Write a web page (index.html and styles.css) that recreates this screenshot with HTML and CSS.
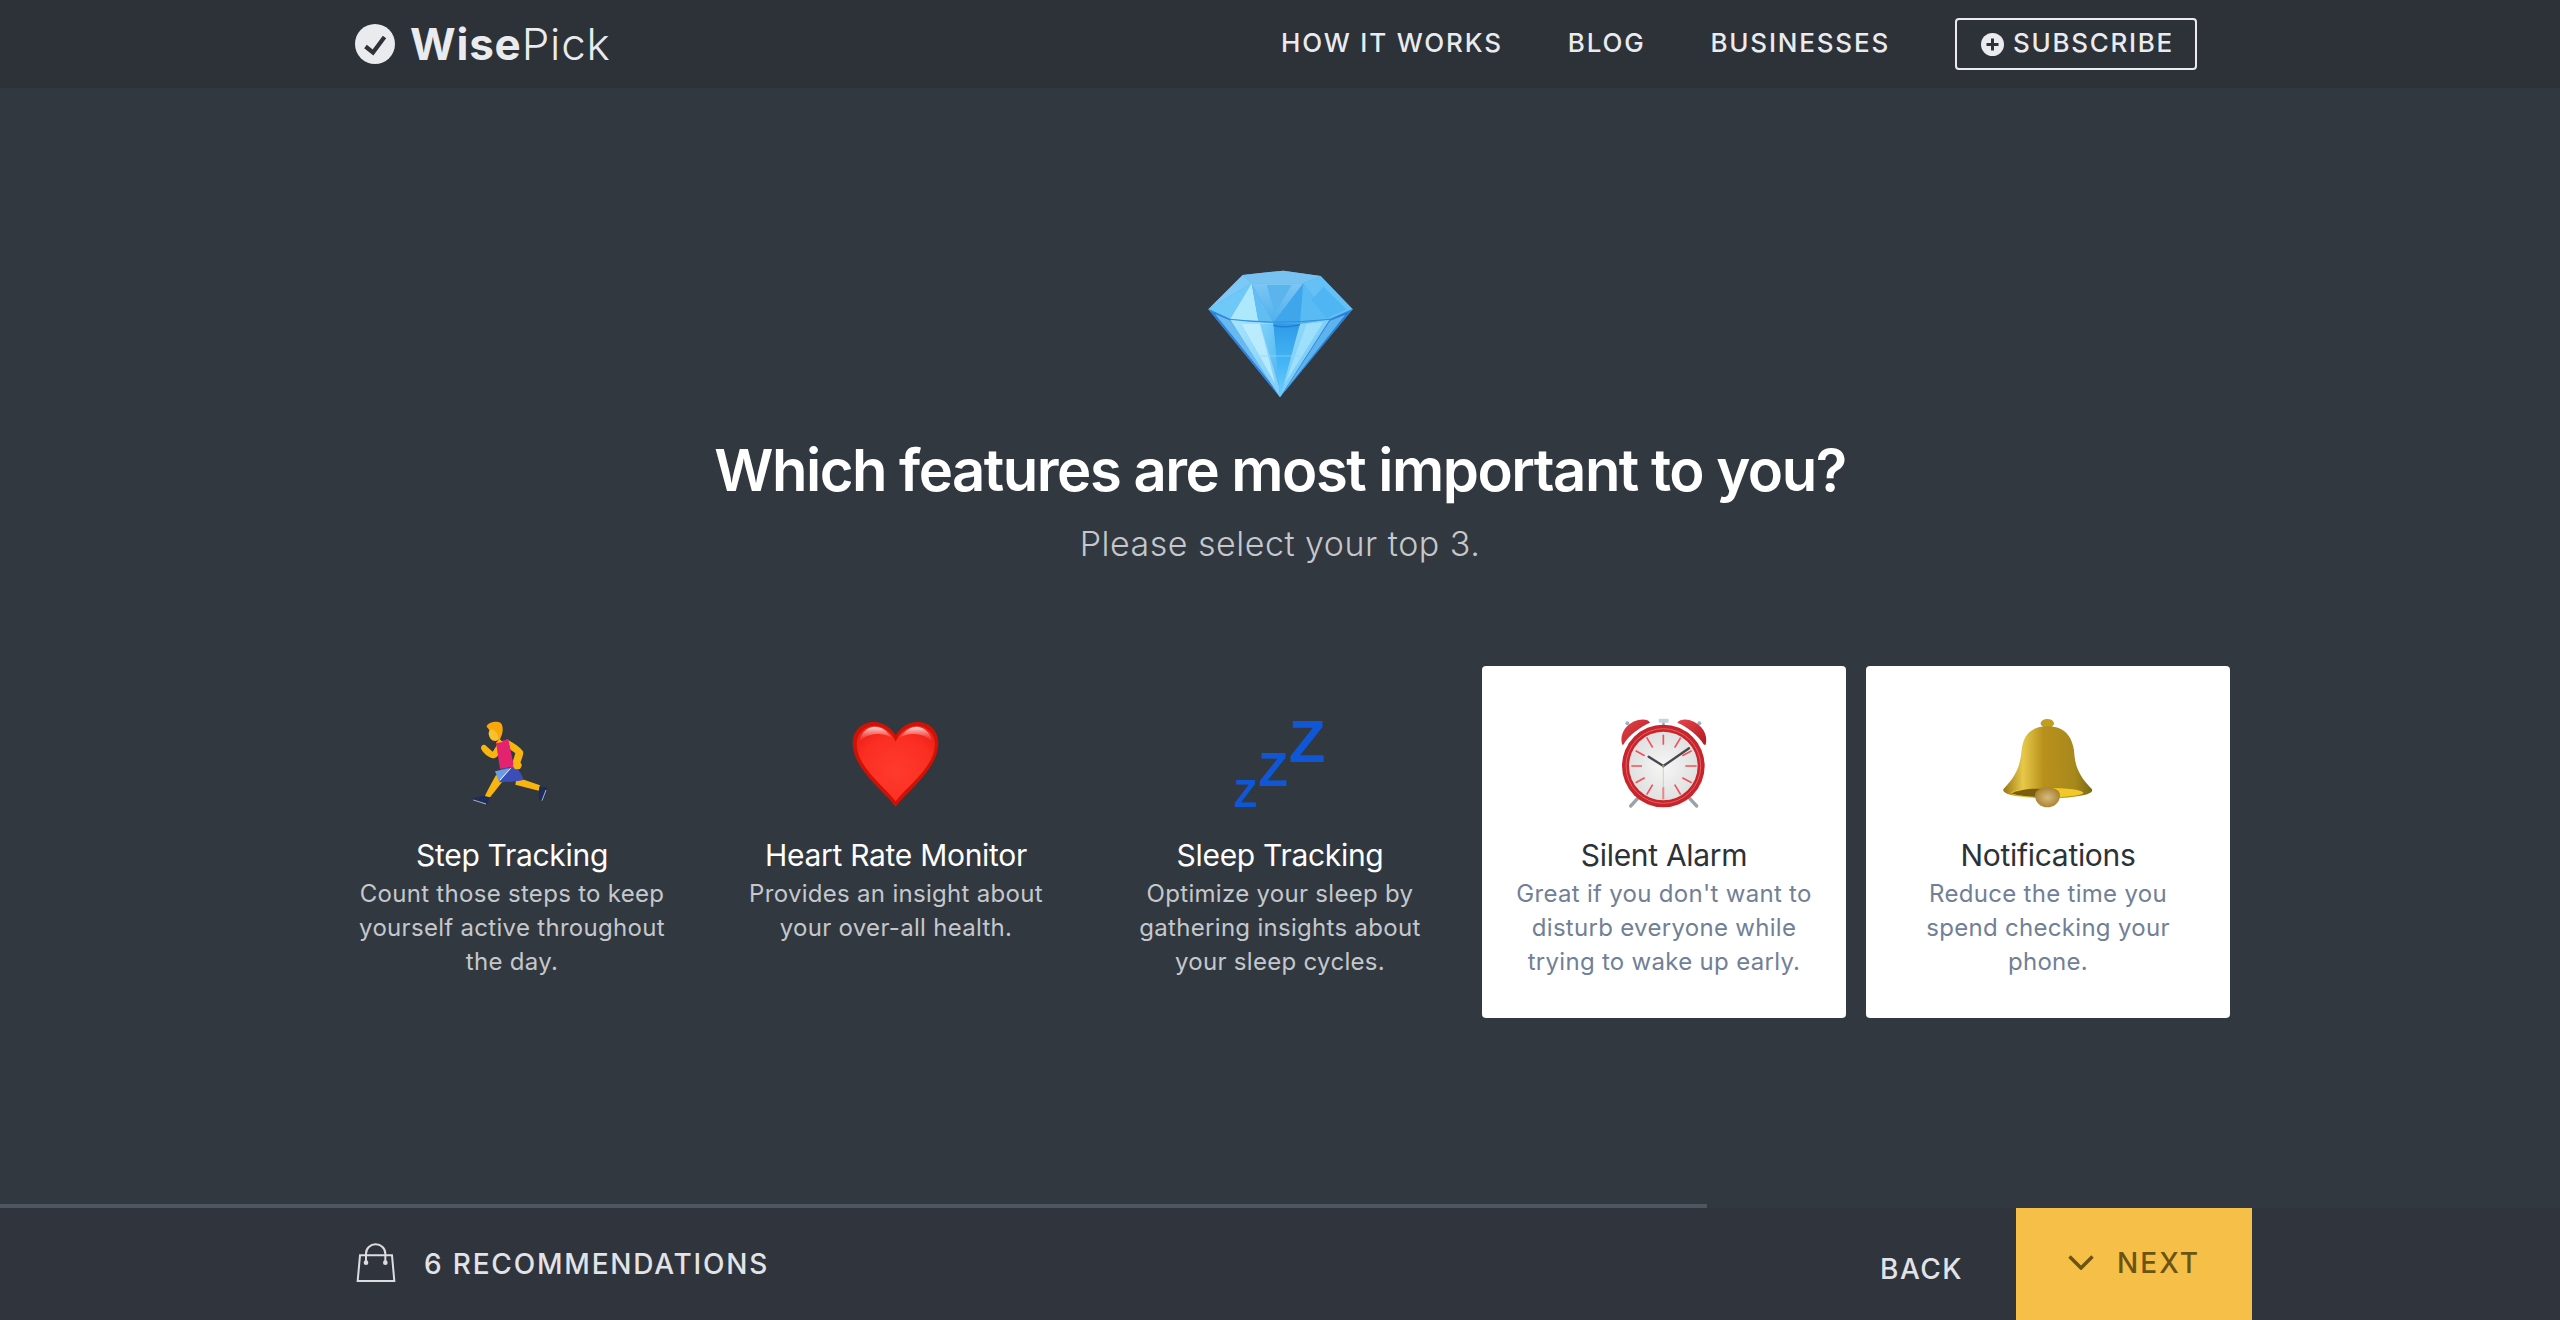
FILE: index.html
```html
<!DOCTYPE html>
<html lang="en">
<head>
<meta charset="utf-8">
<title>WisePick</title>
<link rel="stylesheet" href="styles.css">
</head>
<body>
<header class="topbar">
  <a class="logo">
    <svg class="logo-mark" viewBox="0 0 40 40"><circle cx="20" cy="20" r="20" fill="#e9ebee"/><path d="M10.5 22.5 L18 28.5 L29.5 13" fill="none" stroke="#2d3138" stroke-width="4.2"/></svg>
    <span class="logo-text"><b>Wise</b><span class="logo-light">Pick</span></span>
  </a>
  <nav class="nav">
    <a class="nav-link">HOW IT WORKS</a>
    <a class="nav-link">BLOG</a>
    <a class="nav-link">BUSINESSES</a>
    <a class="subscribe">
      <svg class="plus" viewBox="0 0 23 23"><circle cx="11.5" cy="11.5" r="11.5" fill="#e9ebee"/><path d="M11.5 5.5V17.5M5.5 11.5H17.5" stroke="#2d3138" stroke-width="3"/></svg>
      SUBSCRIBE
    </a>
  </nav>
</header>

<main class="main">
  <svg class="hero-icon" viewBox="120 30 480 480">
    <defs>
      <linearGradient id="dTop" x1="0" y1="0" x2="0" y2="1"><stop offset="0" stop-color="#7cc6f4"/><stop offset="1" stop-color="#4fb0ee"/></linearGradient>
      <linearGradient id="dMid" x1="0" y1="0" x2="0" y2="1"><stop offset="0" stop-color="#2f9be8"/><stop offset=".55" stop-color="#45b6f5"/><stop offset="1" stop-color="#6fd0fb"/></linearGradient>
      <linearGradient id="dL" x1="0" y1="0" x2="1" y2="1"><stop offset="0" stop-color="#a8e4fd"/><stop offset="1" stop-color="#7fcdf8"/></linearGradient>
      <linearGradient id="dR" x1="0" y1="0" x2="1" y2="1"><stop offset="0" stop-color="#9be0fc"/><stop offset="1" stop-color="#5fbcf3"/></linearGradient>
      <linearGradient id="dS" x1="0" y1="0" x2="1" y2="1"><stop offset="0" stop-color="#7ed2fa"/><stop offset="1" stop-color="#4fb2f0"/></linearGradient>
    </defs>
    <polygon points="248,75 370,62 482,78 578,178 360,442 145,178" fill="#4aa7ea"/>
    <polygon points="248,75 370,62 482,78 430,100 275,100" fill="#78c2f2"/>
    <polygon points="248,75 275,100 145,178" fill="#7cc8f6"/>
    <polygon points="275,100 145,178 210,208" fill="#6ec8f8"/>
    <polygon points="275,100 210,208 295,212" fill="#aee8fd"/>
    <polygon points="275,100 295,212 340,218" fill="#62bdf3"/>
    <polygon points="275,100 430,100 340,218" fill="url(#dTop)"/>
    <polygon points="320,105 395,105 345,190" fill="#5bb4ec"/>
    <polygon points="430,100 340,218 420,218" fill="#3fa6eb"/>
    <polygon points="430,100 420,218 510,208" fill="#58bbf4"/>
    <polygon points="430,100 510,208 578,178 482,78" fill="#65c0f6"/>
    <polygon points="455,150 500,205 560,178 490,110" fill="#4fb6f3"/>
    <polygon points="145,178 210,208 360,442" fill="#2f80d6"/>
    <polygon points="165,192 212,212 355,428" fill="#68b9f0"/>
    <polygon points="210,208 340,220 360,442" fill="url(#dL)"/>
    <polygon points="245,222 300,222 345,400" fill="#c6f0fe" opacity=".75"/>
    <polygon points="300,222 340,222 360,420" fill="url(#dS)"/>
    <polygon points="340,220 420,222 360,442" fill="url(#dMid)"/>
    <polygon points="420,222 510,208 360,442" fill="url(#dR)"/>
    <polygon points="440,222 490,216 375,400" fill="#a9e6fd" opacity=".7"/>
    <polygon points="510,208 578,178 360,442" fill="#2c7ed4"/>
    <polygon points="510,212 556,194 370,428" fill="#5cb3ee"/>
    <path d="M300 318 H420" stroke="#8adaf9" stroke-width="3" opacity=".7"/>
    <path d="M145 178 L210 208 Q340 225 510 208 L578 178" fill="none" stroke="#2f8fe0" stroke-width="3"/>
    <path d="M340 226 Q380 236 420 224" fill="none" stroke="#1f7fd0" stroke-width="4"/>
  </svg>

  <h1 class="heading">Which features are most important to you?</h1>
  <p class="subheading">Please select your top 3.</p>

  <section class="cards">
    <article class="card">
      <svg class="card-icon" viewBox="72 48 288 288">
        <path d="M168 225 C160 240 148 260 134 290 L150 292 C168 270 182 250 196 236 Z" fill="#f9b50f"/>
        <path d="M230 232 L300 256 L296 272 L226 254 Z" fill="#f9b50f"/>
        <path d="M177 122 C168 140 162 150 158 155 L138 137 C132 130 120 138 124 148 C130 160 145 172 158 175 C170 176 180 160 190 140 Z" fill="#f9b50f"/>
        <path d="M200 118 C222 128 240 142 250 155 C250 170 240 190 232 208 L212 206 L226 160 C215 150 205 146 195 142 Z" fill="#f9b50f"/>
        <polygon points="168,127 205,118 222,200 180,207" fill="#e3236f"/>
        <path d="M182 206 L226 200 C238 212 248 225 250 240 C225 246 200 246 178 247 Z" fill="#3a4db8"/>
        <path d="M165 214 L210 204 L178 247 Z" fill="#6b9be0"/>
        <path d="M180 240 L212 205" stroke="#fff" stroke-width="3"/>
        <ellipse cx="232" cy="196" rx="13" ry="12" fill="#f9b50f"/>
        <path d="M98 295 L130 287 L150 292 L142 313 L100 302 Z" fill="#1d2c58"/>
        <path d="M100 300 L138 312" stroke="#c8d0e0" stroke-width="2.5"/>
        <path d="M298 260 L322 262 L310 303 L296 298 Z" fill="#1d2c58"/>
        <path d="M318 270 L306 302" stroke="#c8d0e0" stroke-width="2.5"/>
        <path d="M178 116 L168 130 L188 126 Z" fill="#f9b50f"/>
        <ellipse cx="165" cy="100" rx="19" ry="23" fill="#fbc02d"/>
        <path d="M140 80 C142 70 160 64 175 66 C190 68 190 90 186 103 L178 122 L171 100 L158 88 L148 90 Z" fill="#f9a80a"/>
      </svg>
      <h2 class="card-title">Step Tracking</h2>
      <p class="card-text">Count those steps to keep yourself active throughout the day.</p>
    </article>

    <article class="card">
      <svg class="card-icon" viewBox="84 48 288 288">
        <defs>
          <radialGradient id="hFill" cx=".5" cy=".6" r=".62"><stop offset="0" stop-color="#ff3a2e"/><stop offset=".75" stop-color="#fb2e22"/><stop offset="1" stop-color="#f0231a"/></radialGradient>
          <linearGradient id="hShine" x1="0" y1="0" x2="0" y2="1"><stop offset="0" stop-color="#fff" stop-opacity=".85"/><stop offset="1" stop-color="#ff8a80" stop-opacity="0"/></linearGradient>
        </defs>
        <path d="M227 320 C190 272 98 205 98 130 C98 90 128 66 162 66 C192 66 216 86 227 106 C238 86 262 66 292 66 C326 66 355 90 355 130 C355 205 264 272 227 320 Z" fill="#cf1206"/>
        <path d="M227 304 C192 258 110 200 110 132 C110 98 136 77 164 77 C192 77 216 98 227 125 C238 98 262 77 290 77 C318 77 345 98 345 132 C345 200 262 258 227 304 Z" fill="url(#hFill)"/>
        <path d="M118 125 C122 95 146 80 164 80 C184 80 202 92 214 112 C190 98 145 96 118 125 Z" fill="url(#hShine)"/>
        <path d="M337 125 C332 95 308 80 290 80 C272 80 254 92 240 112 C264 98 308 96 337 125 Z" fill="url(#hShine)"/>
      </svg>
      <h2 class="card-title">Heart Rate Monitor</h2>
      <p class="card-text">Provides an insight about your over-all health.</p>
    </article>

    <article class="card">
      <svg class="card-icon" viewBox="96 48 288 288">
        <text class="zed" x="102" y="322" font-size="114">Z</text>
        <text class="zed" x="176" y="258" font-size="144">Z</text>
        <text class="zed" x="266" y="185" font-size="180">Z</text>
      </svg>
      <h2 class="card-title">Sleep Tracking</h2>
      <p class="card-text">Optimize your sleep by gathering insights about your sleep cycles.</p>
    </article>

    <article class="card card-selected">
      <svg class="card-icon" viewBox="78 48 288 288">
        <defs>
          <linearGradient id="cBell" x1="0" y1="0" x2="1" y2="1"><stop offset="0" stop-color="#e8454c"/><stop offset="1" stop-color="#b01a22"/></linearGradient>
          <radialGradient id="cFace" cx=".5" cy=".5" r=".6"><stop offset="0" stop-color="#f6f6f6"/><stop offset="1" stop-color="#dcdcdc"/></radialGradient>
        </defs>
        <path d="M148 290 L122 318" stroke="#9aa3ab" stroke-width="10" stroke-linecap="round"/>
        <path d="M294 290 L320 318" stroke="#9aa3ab" stroke-width="10" stroke-linecap="round"/>
        <circle cx="112" cy="70" r="6" fill="#9cb6c8"/>
        <circle cx="328" cy="70" r="6" fill="#9cb6c8"/>
        <path d="M146 100 L155 112" stroke="#666" stroke-width="7"/>
        <path d="M296 100 L288 112" stroke="#666" stroke-width="7"/>
        <path d="M97 134 C88 105 105 70 145 60 C162 56 176 60 180 68 C155 78 115 105 100 134 Z" fill="url(#cBell)"/>
        <path d="M347 134 C355 105 338 72 298 60 C282 56 268 60 262 68 C288 78 325 105 342 134 Z" fill="url(#cBell)"/>
        <rect x="217" y="66" width="7" height="18" fill="#9aa3ab"/>
        <rect x="206" y="56" width="30" height="12" rx="3" fill="#c5d5e0"/>
        <circle cx="220" cy="198" r="124" fill="#c8242c"/>
        <circle cx="220" cy="198" r="112" fill="none" stroke="#e46066" stroke-width="3"/>
        <circle cx="220" cy="198" r="103" fill="url(#cFace)"/>
        <g stroke="#f0525a" stroke-width="5">
          <path d="M220 104V134M220 262V298M124 198H156M286 198H320"/>
          <path d="M170 112L188 143M272 113L254 143M137 152L164 167M305 152L277 167M137 248L164 233M305 248L277 233M170 284L188 254M272 284L254 254"/>
        </g>
        <path d="M220 198V298" stroke="#d8bd90" stroke-width="2"/>
        <path d="M220 198L176 170" stroke="#45484c" stroke-width="7" stroke-linecap="round"/>
        <path d="M220 198L297 145" stroke="#45484c" stroke-width="7" stroke-linecap="round"/>
        <circle cx="220" cy="198" r="4" fill="#a89060"/>
      </svg>
      <h2 class="card-title">Silent Alarm</h2>
      <p class="card-text">Great if you don't want to disturb everyone while trying to wake up early.</p>
    </article>

    <article class="card card-selected">
      <svg class="card-icon" viewBox="90 48 288 288">
        <defs>
          <linearGradient id="bBody" x1="0" y1="0" x2="1" y2="0"><stop offset="0" stop-color="#9a7610"/><stop offset=".22" stop-color="#e7c94a"/><stop offset=".45" stop-color="#b8911c"/><stop offset=".8" stop-color="#a8881c"/><stop offset="1" stop-color="#7a6a18"/></linearGradient>
          <radialGradient id="bClap" cx=".5" cy=".5" r=".6"><stop offset="0" stop-color="#d8ba80"/><stop offset="1" stop-color="#a07a20"/></radialGradient>
        </defs>
        <ellipse cx="232" cy="70" rx="20" ry="13" fill="#c29d22"/>
        <path d="M232 78 C180 80 160 108 155 150 C150 200 140 225 100 268 C96 280 130 294 232 294 C335 294 372 280 366 268 C325 225 315 200 312 150 C305 108 285 80 232 78 Z" fill="url(#bBody)"/>
        <ellipse cx="232" cy="278" rx="108" ry="14" fill="#f0c828"/>
        <path d="M124 280 C160 265 200 264 232 266 L195 290 C165 290 140 286 124 280 Z" fill="#7a5e10"/>
        <path d="M195 285 C195 255 270 255 270 285 C270 310 250 322 232 322 C214 322 195 310 195 285 Z" fill="url(#bClap)"/>
      </svg>
      <h2 class="card-title">Notifications</h2>
      <p class="card-text">Reduce the time you spend checking your phone.</p>
    </article>
  </section>
</main>

<div class="progress"><div class="progress-fill"></div></div>
<footer class="bottombar">
  <div class="recs">
    <svg class="bag" viewBox="75 155 120 123">
      <path d="M87 195H183L190 272H80Z" fill="none" stroke="#dcdde0" stroke-width="6"/>
      <path d="M105 215V190A29 28 0 0 1 163 190V215" fill="none" stroke="#dcdde0" stroke-width="6"/>
      <circle cx="105" cy="217" r="7" fill="#dcdde0"/>
      <circle cx="163" cy="217" r="7" fill="#dcdde0"/>
    </svg>
    <span class="recs-label">6 RECOMMENDATIONS</span>
  </div>
  <div class="actions">
    <a class="back">BACK</a>
    <a class="next">
      <svg class="chevron" viewBox="0 0 26 15"><path d="M1.5 1.5L13 13L24.5 1.5" fill="none" stroke="#6b5314" stroke-width="3.5"/></svg>
      NEXT
    </a>
  </div>
</footer>
</body>
</html>
```

FILE: styles.css
```css
* { box-sizing: border-box; }
html, body { margin: 0; height: 100%; }
body {
  display: flex;
  flex-direction: column;
  height: 1320px;
  overflow: hidden;
  background: #323840;
  font-family: "Inter", "Liberation Sans", sans-serif;
  color: #fff;
}
.topbar {
  flex: none;
  height: 88px;
  background: #2d3138;
  display: flex;
  align-items: center;
  justify-content: space-between;
  padding: 0 363px 0 355px;
}
.logo { display: flex; align-items: center; gap: 15px; }
.logo-mark { width: 40px; height: 40px; display: block; }
.logo-text { font-size: 44px; letter-spacing: 0.8px; color: #e9ebee; line-height: 50px; }
.logo-text b { font-weight: 700; }
.logo-light { font-weight: 300; }
.nav { display: flex; align-items: center; gap: 65px; padding-bottom: 1px; }
.nav-link { font-size: 26px; font-weight: 500; letter-spacing: 1.8px; color: #e9ebee; padding-bottom: 2px; }
.subscribe {
  display: flex;
  align-items: center;
  gap: 9px;
  height: 52px;
  width: 242px;
  padding: 0 0 2px 24px;
  border: 2px solid #e9ebee;
  border-radius: 4px;
  font-size: 26px;
  font-weight: 500;
  letter-spacing: 1.7px;
  color: #e9ebee;
}
.plus { width: 23px; height: 23px; display: block; margin-top: 3px; }

.main {
  flex: 1;
  display: flex;
  flex-direction: column;
  align-items: center;
  padding-top: 172px;
  min-height: 0;
}
.hero-icon { width: 160px; height: 160px; display: block; flex: none; }
.heading {
  margin: 14px 0 0;
  font-size: 58px;
  line-height: 72px;
  font-weight: 600;
  letter-spacing: -1.5px;
  color: #fff;
}
.subheading {
  margin: 18px 0 0;
  font-size: 34px;
  line-height: 40px;
  font-weight: 300;
  letter-spacing: 0.5px;
  color: #c4c8cd;
}
.cards {
  margin-top: 102px;
  width: 1900px;
  display: grid;
  grid-template-columns: repeat(5, 364px);
  gap: 20px;
}
.card {
  height: 352px;
  padding: 50px 26px 0;
  border-radius: 4px;
  text-align: center;
}
.card-icon { width: 96px; height: 96px; display: block; margin: 0 auto 24px; overflow: visible; }
.card-title {
  margin: 0;
  font-size: 30px;
  line-height: 38px;
  font-weight: 400;
  letter-spacing: -0.3px;
  color: #fff;
}
.card-text {
  margin: 3px 0 0;
  font-size: 24px;
  line-height: 34px;
  letter-spacing: 0.3px;
  color: #c4c8cd;
}
.card-selected { background: #fff; }
.card-selected .card-title { color: #2d3138; }
.card-selected .card-text { color: #718096; }
.zed { font-family: "Liberation Sans", sans-serif; font-weight: 700; fill: #0f57d6; }

.progress { flex: none; height: 4px; }
.progress-fill { width: 66.67%; height: 4px; background: #4d5762; }
.bottombar {
  flex: none;
  height: 112px;
  background: #30343d;
  display: flex;
  justify-content: space-between;
  padding: 0 308px 0 356px;
}
.recs { display: flex; align-items: center; gap: 28px; padding-bottom: 4px; }
.bag { width: 40px; height: 41px; display: block; }
.recs-label { font-size: 28px; font-weight: 500; letter-spacing: 1.8px; color: #e2e3e6; padding-top: 4px; }
.actions { display: flex; align-items: stretch; gap: 53px; }
.back {
  display: flex;
  align-items: center;
  padding-top: 10px;
  font-size: 28px;
  font-weight: 500;
  letter-spacing: 1.5px;
  color: #e2e3e6;
}
.next {
  width: 236px;
  background: #f6bf47;
  display: flex;
  align-items: center;
  justify-content: center;
  gap: 23px;
  padding-bottom: 3px;
  font-size: 28px;
  font-weight: 500;
  letter-spacing: 2px;
  color: #6b5314;
}
.chevron { width: 26px; height: 15px; display: block; }
```
